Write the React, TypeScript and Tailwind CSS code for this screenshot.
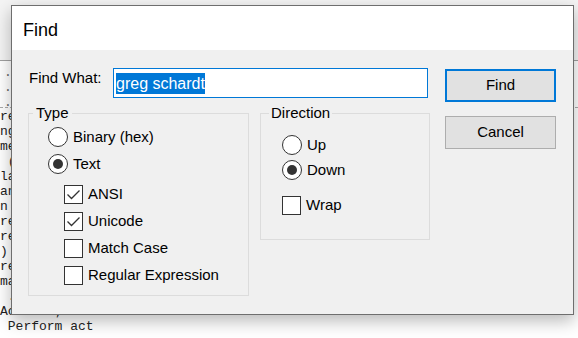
import React from "react";

const ui = "font-['Liberation_Sans',Arial,sans-serif]";

const Radio = ({ checked }: { checked?: boolean }) => (
  <span className="flex h-[20px] w-[20px] flex-none items-center justify-center rounded-full border border-[#333] bg-white">
    {checked && <span className="h-[10px] w-[10px] rounded-full bg-[#333]" />}
  </span>
);

const Check = ({ checked }: { checked?: boolean }) => (
  <span className="flex h-[19px] w-[19px] flex-none items-center justify-center border border-[#333] bg-white">
    {checked && (
      <svg width="17" height="17" viewBox="0 0 17 17">
        <path d="M2.5 8.5 L6.5 12.5 L14.5 4.5" fill="none" stroke="#333" strokeWidth="1.3" />
      </svg>
    )}
  </span>
);

const Option = ({
  kind,
  checked,
  label,
}: {
  kind: "radio" | "check";
  checked?: boolean;
  label: string;
}) => (
  <div className="flex h-[20px] items-center">
    {kind === "radio" ? <Radio checked={checked} /> : <Check checked={checked} />}
    <span className="ml-[5px] text-[15px] leading-[20px] text-black">{label}</span>
  </div>
);

const bgLines = [
  "re",
  "ng",
  "me",
  " (",
  "la",
  "an",
  "n ",
  "re",
  "re",
  ") ",
  "re",
  "ma",
  " .",
  "Actions; 31",
  " Perform act",
];

export default function App() {
  return (
    <div className="relative h-[338px] w-[578px] overflow-hidden bg-white">
      {/* the window behind the dialog */}
      <div className="h-[61px] border-b border-[#a0a0a0] bg-[#f4f4f4]" />
      <div className="font-['Liberation_Mono','Courier_New',monospace] text-[13px] leading-[15px] text-[#222]">
        <div className="h-[47px] border-b border-dashed border-[#aaa] pl-[4px] pt-[4px] text-[#666]">
          <div>.</div>
          <div>.</div>
          <div>.</div>
        </div>
        <div className="pt-[1px]">
          {bgLines.map((l, i) => (
            <div key={i} className="whitespace-pre">
              {l}
            </div>
          ))}
        </div>
      </div>

      {/* Find dialog */}
      <div
        className={`absolute left-[11px] top-[5px] flex h-[310px] w-[563px] flex-col border border-[#6e6e6e] bg-[#f0f0f0] shadow-[0_6px_16px_rgba(0,0,0,0.28)] ${ui}`}
      >
        <div className="h-[44px] flex-none bg-white pl-[11px] pt-[12px] text-[18px] leading-[24px] text-black">
          Find
        </div>
        <div className="flex flex-1 pl-[16px] pt-[18px]">
          <div className="flex w-[402px] flex-col">
            <div className="flex items-start">
              <span className="w-[85px] pl-[1px] text-[15px] leading-[20px] text-black">
                Find What:
              </span>
              <div className="flex h-[30px] w-[315px] items-center border border-[#0078d7] bg-white pl-[2px]">
                <span className="bg-[#0078d7] text-[16px] leading-[21px] text-white">
                  greg schardt
                </span>
              </div>
            </div>
            <div className="mt-[5px] flex items-start gap-[11px]">
              <fieldset className="h-[193px] w-[221px] border border-[#dcdcdc]">
                <legend className="ml-[4px] px-[3px] text-[15px] leading-[20px] text-black">
                  Type
                </legend>
                <div className="flex flex-col pl-[19px] pt-[4px]">
                  <div className="flex flex-col gap-[7px]">
                    <Option kind="radio" label="Binary (hex)" />
                    <Option kind="radio" checked label="Text" />
                  </div>
                  <div className="mt-[10px] flex flex-col gap-[7px] pl-[16px]">
                    <Option kind="check" checked label="ANSI" />
                    <Option kind="check" checked label="Unicode" />
                    <Option kind="check" label="Match Case" />
                    <Option kind="check" label="Regular Expression" />
                  </div>
                </div>
              </fieldset>
              <fieldset className="h-[137px] w-[170px] border border-[#dcdcdc]">
                <legend className="ml-[8px] px-[2px] text-[15px] leading-[20px] text-black">
                  Direction
                </legend>
                <div className="flex flex-col pl-[21px] pt-[12px]">
                  <div className="flex flex-col gap-[5px]">
                    <Option kind="radio" label="Up" />
                    <Option kind="radio" checked label="Down" />
                  </div>
                  <div className="mt-[15px]">
                    <Option kind="check" label="Wrap" />
                  </div>
                </div>
              </fieldset>
            </div>
          </div>
          <div className="ml-[15px] mt-[1px] flex flex-col gap-[14px]">
            <button className="h-[33px] w-[111px] border-2 border-[#0078d7] bg-[#e1e1e1] text-[15px] text-black">
              Find
            </button>
            <button className="h-[33px] w-[111px] border border-[#adadad] bg-[#e1e1e1] text-[15px] text-black">
              Cancel
            </button>
          </div>
        </div>
      </div>
    </div>
  );
}
